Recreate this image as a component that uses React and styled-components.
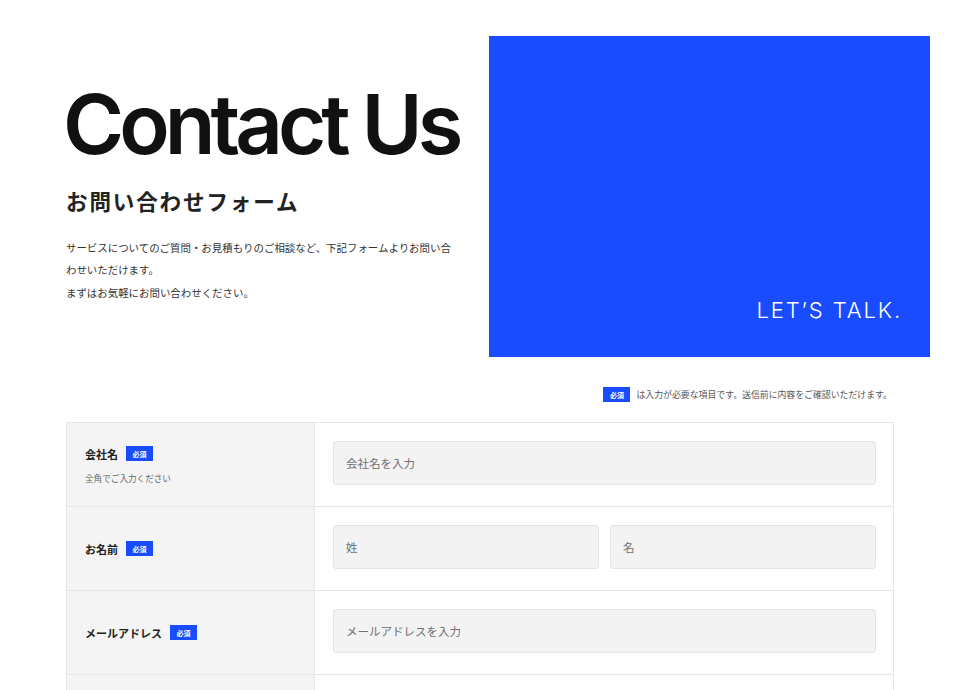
import React from "react";
import styled, { createGlobalStyle } from "styled-components";

const GlobalStyle = createGlobalStyle`
  * { box-sizing: border-box; }
  body {
    margin: 0;
    background: #fff;
    color: #222;
    font-family: Inter, "Noto Sans CJK JP", sans-serif;
  }
`;

const jp = `"Noto Sans CJK JP", "Noto Sans", sans-serif`;

const Page = styled.div`
  width: 960px;
  padding: 36px 30px 0 66px;
`;

const Hero = styled.section`
  display: grid;
  grid-template-columns: 423px 441px;
  height: 321px;
`;

const Intro = styled.div`
  padding-top: 47px;
  padding-right: 30px;
`;

const Title = styled.h1`
  margin: 0 0 0 -3px;
  font-family: Inter, sans-serif;
  font-weight: 600;
  font-size: 83px;
  line-height: 1;
  letter-spacing: -0.06em;
  white-space: nowrap;
  color: #111;
`;

const SubTitle = styled.h2`
  margin: 21px 0 0;
  font-family: ${jp};
  font-weight: 700;
  font-size: 21.5px;
  letter-spacing: 1.9px;
  line-height: 1.3;
  color: #222;
`;

const Lead = styled.p`
  margin: 22px 0 0;
  font-family: ${jp};
  font-size: 10.45px;
  line-height: 22.5px;
  color: #333;
`;

const Visual = styled.div`
  background: #1a4cff;
  display: flex;
  align-items: flex-end;
  justify-content: flex-end;
  padding: 0 28px 34px 0;
`;

const Talk = styled.span`
  font-family: Inter, sans-serif;
  font-weight: 300;
  font-size: 22px;
  letter-spacing: 1.9px;
  color: #fff;
`;

const FormSection = styled.section`
  width: 828px;
  margin-top: 30px;
`;

const Notice = styled.p`
  margin: 0 0 20px;
  display: flex;
  justify-content: flex-end;
  align-items: center;
  gap: 6px;
  padding-right: 2px;
  font-family: ${jp};
  font-size: 8.9px;
  color: #555;
`;

const Badge = styled.span`
  display: inline-flex;
  align-items: center;
  justify-content: center;
  width: 27px;
  height: 15px;
  background: #1a4cff;
  color: #fff;
  font-family: ${jp};
  font-weight: 700;
  font-size: 7px;
`;

const Table = styled.div`
  border: 1px solid #e6e6e6;
  border-bottom: none;
`;

const Row = styled.div`
  display: grid;
  grid-template-columns: 248px 1fr;
  border-bottom: 1px solid #e6e6e6;
  height: 84px;
`;

const LabelCell = styled.div`
  background: #f4f4f4;
  border-right: 1px solid #e6e6e6;
  padding: 0 18px;
  display: flex;
  flex-direction: column;
  justify-content: center;
  gap: 10px;
`;

const LabelLine = styled.div`
  display: flex;
  align-items: center;
  gap: 8px;
  font-family: ${jp};
  font-weight: 700;
  font-size: 11px;
  color: #222;
`;

const Hint = styled.div`
  font-family: ${jp};
  font-size: 8.6px;
  color: #666;
`;

const FieldCell = styled.div`
  padding: 18px 17px 0 18px;
  display: flex;
  gap: 11px;
`;

const Input = styled.input`
  flex: 1;
  min-width: 0;
  height: 44px;
  background: #f3f3f3;
  border: 1px solid #e4e4e4;
  border-radius: 3px;
  padding: 0 12px;
  font-family: ${jp};
  font-size: 11.5px;
  color: #333;
  outline: none;
  &::placeholder { color: #707070; }
`;

const fields = [
  { label: "会社名", hint: "全角でご入力ください", inputs: ["会社名を入力"] },
  { label: "お名前", inputs: ["姓", "名"] },
  { label: "メールアドレス", inputs: ["メールアドレスを入力"] },
  { label: "電話番号", inputs: ["電話番号を入力"] },
];

export default function App() {
  return (
    <Page>
      <GlobalStyle />
      <Hero>
        <Intro>
          <Title>Contact Us</Title>
          <SubTitle>お問い合わせフォーム</SubTitle>
          <Lead>
            サービスについてのご質問・お見積もりのご相談など、下記フォームよりお問い合わせいただけます。
            <br />
            まずはお気軽にお問い合わせください。
          </Lead>
        </Intro>
        <Visual>
          <Talk>LET’S TALK.</Talk>
        </Visual>
      </Hero>
      <FormSection>
        <Notice>
          <Badge>必須</Badge>
          は入力が必要な項目です。送信前に内容をご確認いただけます。
        </Notice>
        <Table>
          {fields.map((f) => (
            <Row key={f.label}>
              <LabelCell>
                <LabelLine>
                  {f.label}
                  <Badge>必須</Badge>
                </LabelLine>
                {f.hint && <Hint>{f.hint}</Hint>}
              </LabelCell>
              <FieldCell>
                {f.inputs.map((ph) => (
                  <Input key={ph} placeholder={ph} />
                ))}
              </FieldCell>
            </Row>
          ))}
        </Table>
      </FormSection>
    </Page>
  );
}
